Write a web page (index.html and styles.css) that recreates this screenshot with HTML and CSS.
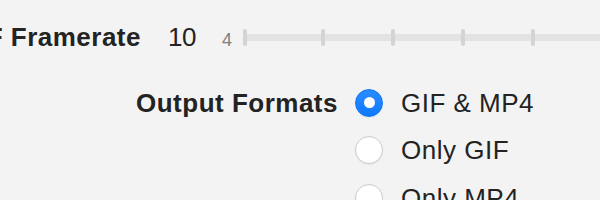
FILE: index.html
```html
<!DOCTYPE html>
<html lang="en">
<head>
    <meta charset="UTF-8">
    <title>Export Settings</title>
    <link rel="stylesheet" href="styles.css">
</head>
<body>
    <div class="row framerate-row">
        <div class="label-cell narrow">
            <span class="label">GIF Framerate</span>
        </div>
        <span class="value">10</span>
        <span class="min-value">4</span>
        <div class="slider">
            <span class="tick first"></span>
            <span class="tick"></span>
            <span class="tick"></span>
            <span class="tick"></span>
            <span class="tick"></span>
            <span class="tick"></span>
        </div>
    </div>
    <div class="formats">
        <div class="label-cell wide">
            <span class="label">Output Formats</span>
        </div>
        <div class="options">
            <label class="option">
                <span class="radio checked"></span>
                <span class="option-text">GIF &amp; MP4</span>
            </label>
            <label class="option">
                <span class="radio"></span>
                <span class="option-text">Only GIF</span>
            </label>
            <label class="option">
                <span class="radio"></span>
                <span class="option-text">Only MP4</span>
            </label>
        </div>
    </div>
</body>
</html>
```

FILE: styles.css
```css
* {
    margin: 0;
    padding: 0;
    box-sizing: border-box;
}
html, body {
    overflow: hidden;
}
body {
    background: #f3f3f3;
    font-family: "Liberation Sans", Arial, sans-serif;
    font-size: 26px;
    line-height: 30px;
    color: #232323;
    letter-spacing: 0.5px;
    padding-top: 22px;
    width: 600px;
    height: 200px;
}
.row {
    display: flex;
    align-items: baseline;
}
.label-cell {
    display: flex;
    justify-content: flex-end;
    white-space: nowrap;
    flex-shrink: 0;
}
.label-cell.narrow {
    width: 141px;
}
.label-cell.wide {
    width: 338px;
    height: 47px;
    align-items: center;
}
.label {
    font-weight: bold;
}
.value {
    margin-left: 27px;
    letter-spacing: -0.5px;
}
.min-value {
    margin-left: 26px;
    font-size: 18px;
    color: #7d7d7d;
    letter-spacing: 0;
}
.slider {
    position: relative;
    display: flex;
    gap: 66px;
    height: 17px;
    margin-left: 11px;
    flex: 1;
    margin-right: -100px;
}
.slider::before {
    content: "";
    position: absolute;
    left: 0;
    right: 0;
    top: 5px;
    height: 7px;
    border-radius: 3px;
    background: #e3e3e3;
}
.tick {
    position: relative;
    width: 4px;
    height: 17px;
    border-radius: 2px;
    background: #d4d4d4;
}
.tick.first {
    margin-right: 8px;
}
.formats {
    display: flex;
    margin-top: 24px;
}
.options {
    display: flex;
    flex-direction: column;
    margin-left: 17px;
}
.option {
    display: flex;
    align-items: center;
    height: 47.5px;
    gap: 18px;
}
.radio {
    width: 28px;
    height: 28px;
    border-radius: 50%;
    background: #fff;
    border: 1px solid #cbcbcb;
    box-shadow: 0 1px 1px rgba(0, 0, 0, 0.06);
    display: flex;
    align-items: center;
    justify-content: center;
    flex-shrink: 0;
}
.radio.checked {
    background: linear-gradient(#2a8bff, #0f7aff);
    border-color: #0f76f5;
}
.radio.checked::after {
    content: "";
    width: 11px;
    height: 11px;
    border-radius: 50%;
    background: #fff;
}
.option-text {
    white-space: nowrap;
}
```
